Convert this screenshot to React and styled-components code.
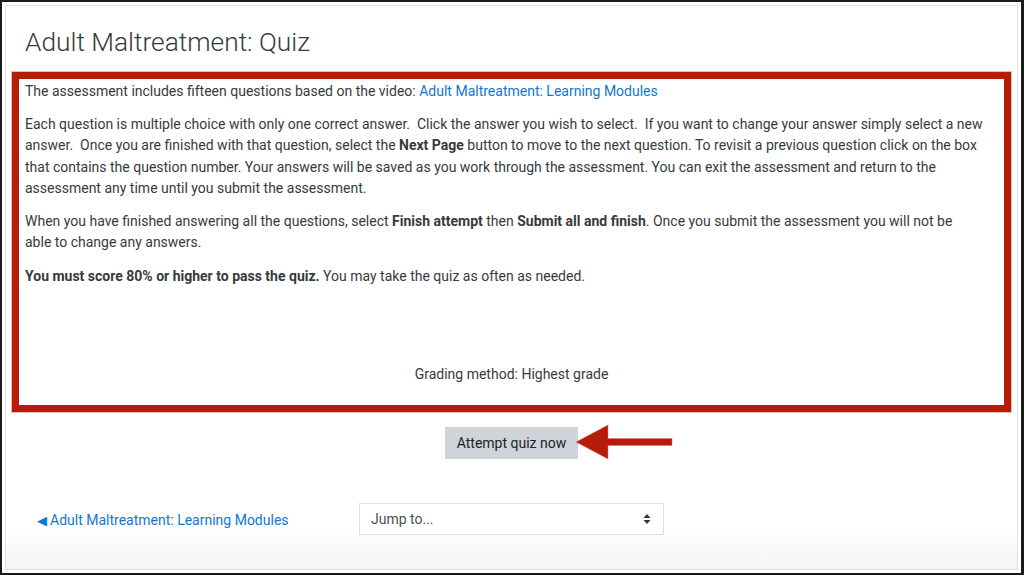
import React from "react";
import styled, { createGlobalStyle } from "styled-components";

const GlobalStyle = createGlobalStyle`
  html, body {
    margin: 0;
    padding: 0;
    background: #fff;
  }
  body {
    font-family: "Roboto", "Liberation Sans", sans-serif;
    color: #373a3c;
  }
`;

const Frame = styled.div`
  width: 1024px;
  height: 575px;
  box-sizing: border-box;
  border: 2px solid #1b1b1b;
  border-right-width: 3px;
  padding: 3px;
  background: #fff;
`;

const Card = styled.div`
  height: 100%;
  box-sizing: border-box;
  border: 1px solid #e2e2e2;
  padding: 19px 6px 0;
  background: linear-gradient(
    to bottom,
    #fff calc(100% - 40px),
    #f4f4f4 100%
  );
`;

const Title = styled.h2`
  margin: 0 0 13px 13px;
  font-size: 26.3px;
  line-height: 34px;
  font-weight: 300;
  color: #373a3c;
`;

const Highlight = styled.div`
  border: 7px solid #b51d0a;
  box-shadow: 0 0 0 1px rgba(230, 140, 130, 0.6);
  padding: 2px 6px 19px;
  font-size: 14px;
  line-height: 21.5px;
`;

const Para = styled.p`
  margin: 0 0 ${({ $gap }) => $gap || 11}px;
  white-space: nowrap;
`;

const Link = styled.a`
  color: #1177d1;
  text-decoration: none;
`;

const Grading = styled.div`
  margin-top: 77px;
  text-align: center;
`;

const ActionRow = styled.div`
  display: flex;
  justify-content: center;
  margin-top: 15px;
`;

const ButtonWrap = styled.div`
  position: relative;
`;

const Button = styled.button`
  height: 32px;
  width: 133px;
  border: none;
  background: #ced4da;
  color: #1d2125;
  font-family: inherit;
  font-size: 14px;
  padding: 1px 0 0;
`;

const Arrow = styled.svg`
  position: absolute;
  left: 130px;
  top: -3px;
`;

const NavRow = styled.div`
  display: flex;
  align-items: center;
  margin-top: 44px;
  padding-left: 25px;
`;

const PrevLink = styled.a`
  flex: 0 0 322px;
  color: #1177d1;
  font-size: 14px;
  line-height: 20px;
  padding-top: 4px;
  text-decoration: none;
`;

const Tri = styled.span`
  font-size: 12.5px;
  margin-right: 3px;
`;

const Select = styled.div`
  width: 305px;
  height: 32px;
  box-sizing: border-box;
  border: 1px solid #dcdfe3;
  display: flex;
  align-items: center;
  justify-content: space-between;
  padding: 1px 12px 0 11px;
  font-size: 14px;
  color: #495057;
`;

const sp = "\u00a0 ";

export default function App() {
  return (
    <>
      <GlobalStyle />
      <Frame>
        <Card>
          <Title>Adult Maltreatment: Quiz</Title>
          <Highlight>
            <Para>
              The assessment includes fifteen questions based on the video:{" "}
              <Link href="#">Adult Maltreatment: Learning Modules</Link>
            </Para>
            <Para>
              Each question is multiple choice with only one correct answer.{sp}Click the answer you wish to select.{sp}If you want to change your answer simply select a new
              <br />
              answer.{sp}Once you are finished with that question, select the <b>Next Page</b> button to move to the next question. To revisit a previous question click on the box
              <br />
              that contains the question number. Your answers will be saved as you work through the assessment. You can exit the assessment and return to the
              <br />
              assessment any time until you submit the assessment.
            </Para>
            <Para $gap={12}>
              When you have finished answering all the questions, select <b>Finish attempt</b> then <b>Submit all and finish</b>. Once you submit the assessment you will not be
              <br />
              able to change any answers.
            </Para>
            <Para $gap={0}>
              <b>You must score 80% or higher to pass the quiz.</b> You may take the quiz as often as needed.
            </Para>
            <Grading>Grading method: Highest grade</Grading>
          </Highlight>
          <ActionRow>
            <ButtonWrap>
              <Button>Attempt quiz now</Button>
              <Arrow width="98" height="36" viewBox="0 0 98 36">
                <polygon
                  points="1,18 33,1 33,14.5 97,14.5 97,21.5 33,21.5 33,35"
                  fill="#b51d0a"
                  stroke="rgba(225,120,110,0.5)"
                  strokeWidth="1"
                />
              </Arrow>
            </ButtonWrap>
          </ActionRow>
          <NavRow>
            <PrevLink href="#">
              <Tri>◀</Tri>Adult Maltreatment: Learning Modules
            </PrevLink>
            <Select>
              <span>Jump to...</span>
              <svg width="8" height="12" viewBox="0 0 8 12">
                <polygon points="4,1 7.5,5 0.5,5" fill="#333" />
                <polygon points="0.5,7 7.5,7 4,11" fill="#333" />
              </svg>
            </Select>
          </NavRow>
        </Card>
      </Frame>
    </>
  );
}
